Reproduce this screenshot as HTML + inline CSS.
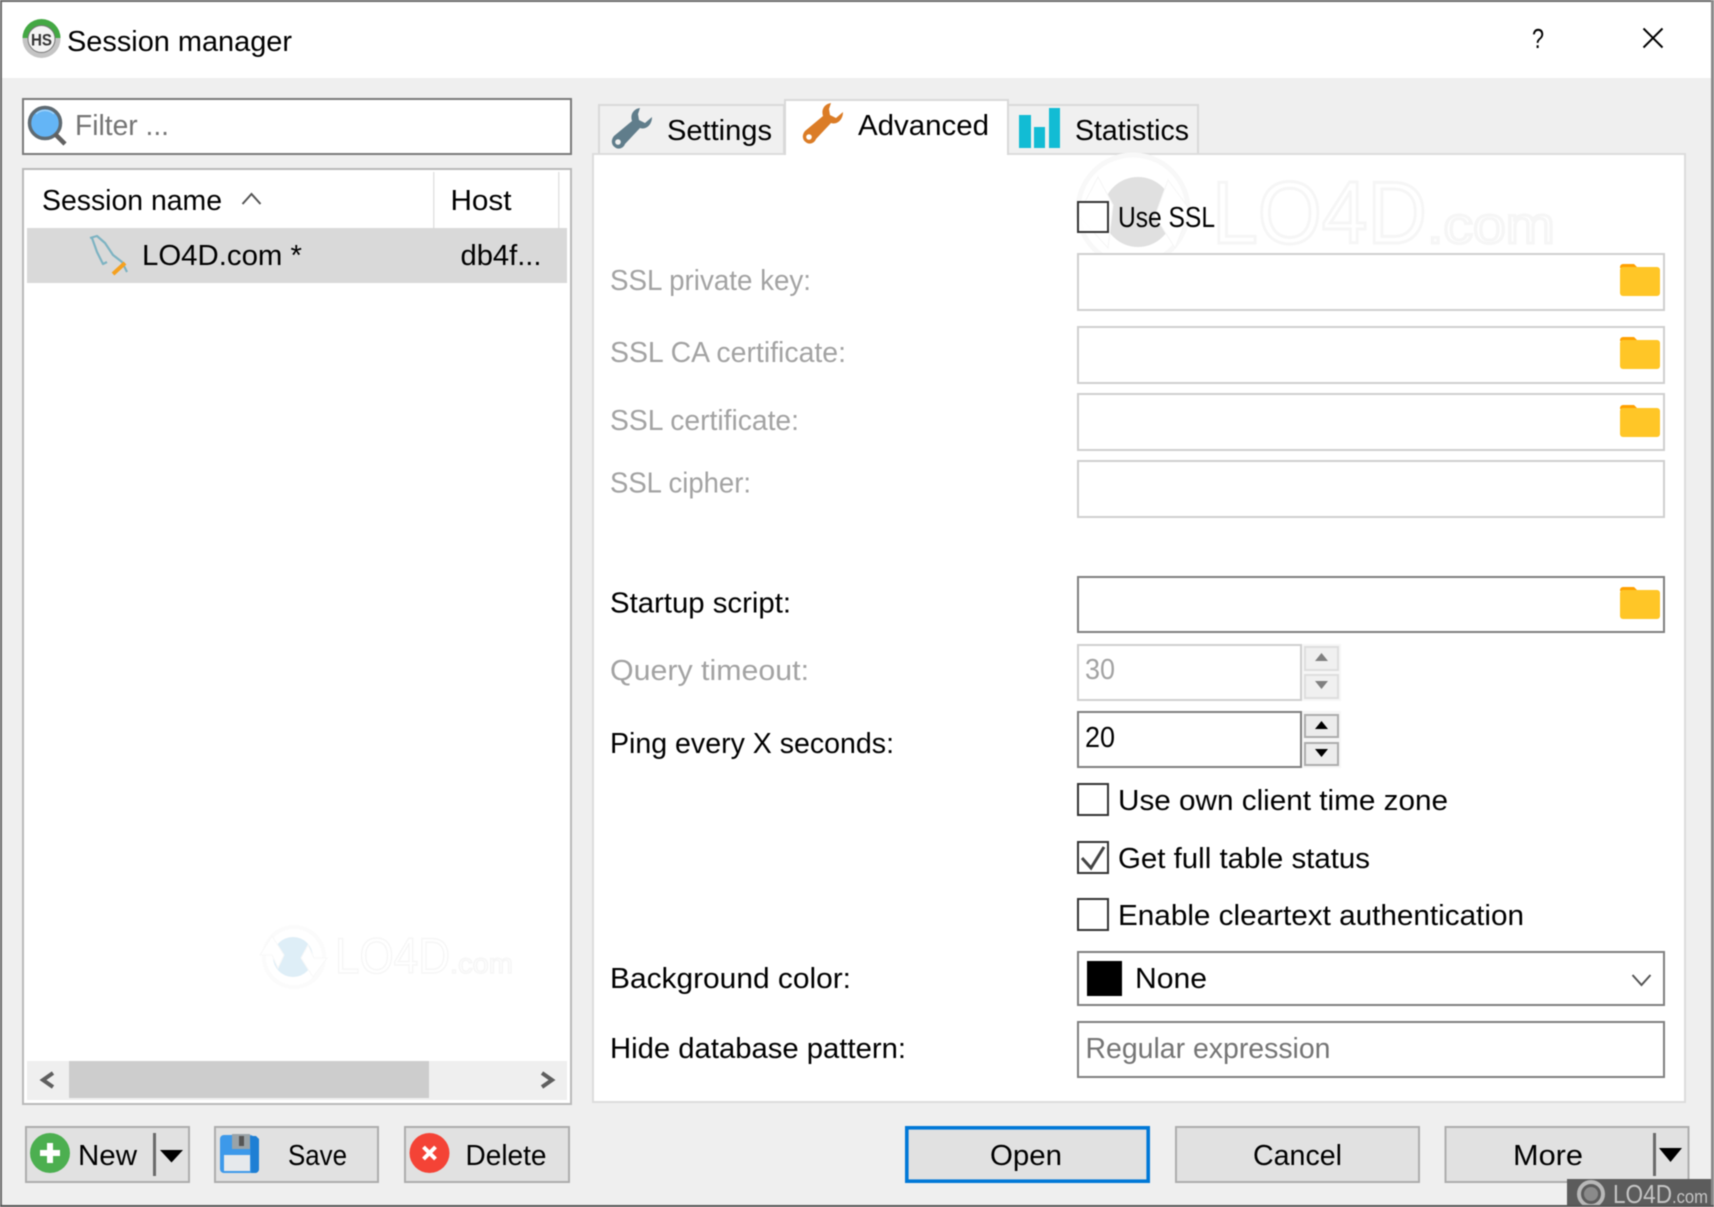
<!DOCTYPE html>
<html lang="en">
<head>
<meta charset="utf-8">
<title>Session manager</title>
<style>
html,body{margin:0;padding:0;width:1714px;height:1207px;overflow:hidden;background:#efefef}
svg{display:block;filter:blur(.55px)}
text{font-family:"Liberation Sans",Arial,sans-serif;font-size:29px;fill:#000;white-space:pre}
.g{fill:#a3a3a3}
.p{fill:#757575}
.w{font-size:88px;fill:#fff;stroke:#f6f6f6;stroke-width:3px}
.w2{font-size:52px;fill:#fff;stroke:#f6f6f6;stroke-width:3px}
</style>
</head>
<body>
<svg xmlns="http://www.w3.org/2000/svg" width="1714" height="1207" viewBox="0 0 1714 1207">
<defs>
<path id="wr" d="M28 0C21 1 18 7 20 13L2 28C-2 33 0 38 4 40C8 42 12 39 13 36L28 20C34 22 40 17 40 9L33 15L27 12L26 6Z"/>
<g id="fd">
<path d="M0 3a3 3 0 0 1 3-3h11l4 4H0Z" fill="#ffa000"/>
<rect x="0" y="3" width="40" height="29" rx="3" fill="#ffc627"/>
</g>
</defs>

<!-- window -->
<rect width="1714" height="1207" fill="#efefef"/>
<rect x="0" y="0" width="1714" height="78" fill="#fff"/>

<!-- title bar -->
<circle cx="41.5" cy="39" r="19" fill="#c4c4c4"/>
<path d="M22.5 38a19 19 0 0 1 38 0Z" fill="#43a843"/>
<circle cx="41.5" cy="39" r="13.500" fill="#f4f4f4" stroke="#777" stroke-width="1"/>
<text x="31" y="45.500" textLength="21" lengthAdjust="spacingAndGlyphs" style="font-size:17px;font-weight:700;fill:#333">HS</text>
<text x="67" y="51" textLength="225" lengthAdjust="spacingAndGlyphs">Session manager</text>
<text x="1532" y="48" textLength="12" lengthAdjust="spacingAndGlyphs" style="font-size:28px">?</text>
<path d="M1643.500 28.500 1662.500 47.500M1662.500 28.500 1643.500 47.500" stroke="#000" stroke-width="2" fill="none"/>

<!-- filter box -->
<rect x="23" y="99" width="548" height="55" fill="#fff" stroke="#7a7a7a" stroke-width="2"/>
<circle cx="45" cy="123" r="15.500" fill="#64b5f6" stroke="#5f6b73" stroke-width="3.500"/>
<path d="M36 114a13 13 0 0 1 18 0" stroke="#bbdefb" stroke-width="1.500" fill="none" opacity=".7"/>
<path d="M55 134 65 144" stroke="#616161" stroke-width="4.500"/>
<text x="75" y="135" textLength="94" lengthAdjust="spacingAndGlyphs" class="p">Filter ...</text>

<!-- session list -->
<rect x="23" y="169" width="548" height="935" fill="#fff" stroke="#b9b9b9" stroke-width="2"/>
<text x="42" y="210" textLength="180" lengthAdjust="spacingAndGlyphs">Session name</text>
<path d="M242.500 204 251.500 194 260.500 204" fill="none" stroke="#555" stroke-width="2"/>
<rect x="433" y="172" width="1.500" height="56" fill="#e3e3e3"/>
<rect x="558" y="172" width="1.500" height="56" fill="#e3e3e3"/>
<text x="450.500" y="210" textLength="61" lengthAdjust="spacingAndGlyphs">Host</text>
<rect x="27" y="228" width="540" height="55" fill="#d9d9d9"/>
<path d="M90 238 97 236 105 243 113 255 122 262 127 272M92 238 97 252 103 264 107 262" fill="none" stroke="#7db3c2" stroke-width="2.200" stroke-linejoin="round"/>
<path d="M113 274 125 263" stroke="#f5a11f" stroke-width="4"/>
<text x="142" y="265" textLength="160" lengthAdjust="spacingAndGlyphs">LO4D.com *</text>
<text x="460.500" y="265" textLength="81" lengthAdjust="spacingAndGlyphs">db4f...</text>

<!-- list watermark -->
<circle cx="294" cy="957" r="30" fill="none" stroke="#fbfbfb" stroke-width="4"/>
<circle cx="293" cy="957" r="20" fill="#deeef7"/>
<path d="M260 955 272 936 284 955 278 968 272 955Z M327 958 313 977 301 958 308 945 314 958Z" fill="#fff" stroke="#f8f8f8"/>
<text x="335" y="973" textLength="115" lengthAdjust="spacingAndGlyphs" style="font-size:50px;fill:#fff;stroke:#f6f6f6;stroke-width:1.500px">LO4D</text>
<text x="450" y="973" textLength="63" lengthAdjust="spacingAndGlyphs" style="font-size:28px;fill:#fff;stroke:#f6f6f6;stroke-width:1.500px">.com</text>

<!-- scrollbar -->
<rect x="27" y="1061" width="540" height="39" fill="#efefef"/>
<rect x="69" y="1061" width="360" height="37" fill="#cdcdcd"/>
<path d="M53 1073 43 1080 53 1087" fill="none" stroke="#5f5f5f" stroke-width="4"/>
<path d="M542 1073 552 1080 542 1087" fill="none" stroke="#5f5f5f" stroke-width="4"/>

<!-- left buttons -->
<rect x="26" y="1127" width="163" height="55" fill="#e1e1e1" stroke="#adadad" stroke-width="2"/>
<circle cx="50" cy="1153" r="20" fill="#4caf50"/>
<path d="M50 1143v20M40 1153h20" stroke="#fff" stroke-width="6"/>
<text x="78" y="1165" textLength="59" lengthAdjust="spacingAndGlyphs">New</text>
<rect x="153" y="1133" width="3" height="43" fill="#6a6a6a"/>
<path d="M160 1150h23l-11.500 12.500Z" fill="#000"/>

<rect x="215" y="1127" width="163" height="55" fill="#e1e1e1" stroke="#adadad" stroke-width="2"/>
<path d="M220 1139a4 4 0 0 1 4-4h27l8 4v30a4 4 0 0 1-4 4h-31a4 4 0 0 1-4-4Z" fill="#3d99ea"/>
<path d="M250 1136h6l3 3v30a4 4 0 0 1-4 4h-4Z" fill="#1e7fd4"/>
<rect x="232" y="1134" width="18" height="15" fill="#9aa3a8"/>
<rect x="239" y="1136" width="5" height="10" fill="#555"/>
<rect x="224" y="1155" width="26" height="16" fill="#e6e9ec"/>
<text x="288" y="1165" textLength="59" lengthAdjust="spacingAndGlyphs">Save</text>

<rect x="405" y="1127" width="164" height="55" fill="#e1e1e1" stroke="#adadad" stroke-width="2"/>
<circle cx="429.500" cy="1153" r="20" fill="#f44336"/>
<path d="M423.500 1147 435.500 1159M435.500 1147 423.500 1159" stroke="#fff" stroke-width="4"/>
<text x="465.500" y="1165" textLength="81" lengthAdjust="spacingAndGlyphs">Delete</text>

<!-- tabs -->
<rect x="599" y="105" width="185" height="50" fill="#f0f0f0" stroke="#d9d9d9" stroke-width="2"/>
<rect x="1008" y="105" width="190" height="50" fill="#f0f0f0" stroke="#d9d9d9" stroke-width="2"/>
<rect x="593" y="154" width="1092" height="948" fill="#fff" stroke="#dcdcdc" stroke-width="2"/>
<path d="M785 155V100H1008V155" fill="#fff" stroke="#d9d9d9" stroke-width="2"/>
<rect x="786" y="150" width="221" height="6" fill="#fff"/>

<use href="#wr" x="612" y="108" fill="#607d8b"/>
<circle cx="618" cy="142" r="2.800" fill="#f0f0f0"/>
<text x="667" y="140" textLength="105" lengthAdjust="spacingAndGlyphs">Settings</text>
<use href="#wr" x="803" y="103" fill="#db7c26"/>
<circle cx="809" cy="137" r="2.800" fill="#fff"/>
<text x="858" y="135" textLength="131" lengthAdjust="spacingAndGlyphs">Advanced</text>
<rect x="1019" y="115" width="12" height="33" fill="#12bcd4"/>
<rect x="1034" y="127" width="11" height="21" fill="#12bcd4"/>
<rect x="1049" y="108" width="11" height="40" fill="#12bcd4"/>
<text x="1075" y="140" textLength="114" lengthAdjust="spacingAndGlyphs">Statistics</text>

<!-- panel watermark -->
<circle cx="1133" cy="210" r="55" fill="none" stroke="#f8f8f8" stroke-width="5"/>
<circle cx="1138" cy="212" r="35" fill="#e0e0e0"/>
<path d="M1078 215 1098 177 1113 205 1108 248Z M1190 210 1175 248 1155 216 1168 180Z" fill="#fff" stroke="#f5f5f5"/>
<text x="1212" y="243" textLength="215" lengthAdjust="spacingAndGlyphs" class="w">LO4D</text>
<text x="1427" y="243" textLength="128" lengthAdjust="spacingAndGlyphs" class="w2">.com</text>

<!-- Use SSL -->
<rect x="1078" y="202" width="30" height="30" fill="#fff" fill-opacity=".8" stroke="#333" stroke-width="2"/>
<text x="1118" y="227" textLength="97" lengthAdjust="spacingAndGlyphs" fill="#000">Use SSL</text>

<!-- disabled rows -->
<text x="610" y="290" textLength="201" lengthAdjust="spacingAndGlyphs" class="g">SSL private key:</text>
<rect x="1078" y="254" width="586" height="56" fill="#fff" stroke="#cfcfcf" stroke-width="2"/>
<use href="#fd" x="1620" y="264"/>
<text x="610" y="362" textLength="236" lengthAdjust="spacingAndGlyphs" class="g">SSL CA certificate:</text>
<rect x="1078" y="327" width="586" height="56" fill="#fff" stroke="#cfcfcf" stroke-width="2"/>
<use href="#fd" x="1620" y="337"/>
<text x="610" y="430" textLength="189" lengthAdjust="spacingAndGlyphs" class="g">SSL certificate:</text>
<rect x="1078" y="394" width="586" height="56" fill="#fff" stroke="#cfcfcf" stroke-width="2"/>
<use href="#fd" x="1620" y="405"/>
<text x="610" y="492.500" textLength="141" lengthAdjust="spacingAndGlyphs" class="g">SSL cipher:</text>
<rect x="1078" y="461" width="586" height="56" fill="#fff" stroke="#cfcfcf" stroke-width="2"/>

<!-- startup -->
<text x="610" y="612.500" textLength="181" lengthAdjust="spacingAndGlyphs">Startup script:</text>
<rect x="1078" y="577" width="586" height="55" fill="#fff" stroke="#808080" stroke-width="2"/>
<use href="#fd" x="1620" y="587"/>

<!-- query timeout -->
<text x="610" y="680" textLength="199" lengthAdjust="spacingAndGlyphs" class="g">Query timeout:</text>
<rect x="1078" y="645" width="223" height="55" fill="#fff" stroke="#cfcfcf" stroke-width="2"/>
<text x="1085" y="679" textLength="30" lengthAdjust="spacingAndGlyphs" class="g">30</text>
<rect x="1302" y="644" width="39" height="57" fill="#f6f6f6"/>
<rect x="1305" y="647" width="33" height="23" fill="#f0f0f0" stroke="#dedede" stroke-width="2"/>
<rect x="1305" y="675" width="33" height="23" fill="#f0f0f0" stroke="#dedede" stroke-width="2"/>
<path d="M1315 661h13l-6.500-8Z" fill="#808080"/>
<path d="M1315 681h13l-6.500 8Z" fill="#808080"/>

<!-- ping -->
<text x="610" y="753" textLength="284" lengthAdjust="spacingAndGlyphs">Ping every X seconds:</text>
<rect x="1078" y="712" width="223" height="55" fill="#fff" stroke="#808080" stroke-width="2"/>
<text x="1085" y="747" textLength="30" lengthAdjust="spacingAndGlyphs">20</text>
<rect x="1302" y="711" width="39" height="57" fill="#f6f6f6"/>
<rect x="1305" y="715" width="33" height="22" fill="#ececec" stroke="#adadad" stroke-width="2"/>
<rect x="1305" y="743" width="33" height="22" fill="#ececec" stroke="#adadad" stroke-width="2"/>
<path d="M1315 729h13l-6.500-8Z" fill="#000"/>
<path d="M1315 749h13l-6.500 8Z" fill="#000"/>

<!-- checkboxes -->
<rect x="1078" y="784" width="30" height="31" fill="#fff" stroke="#333" stroke-width="2"/>
<text x="1118" y="810" textLength="330" lengthAdjust="spacingAndGlyphs">Use own client time zone</text>
<rect x="1078" y="842" width="30" height="31" fill="#fff" stroke="#333" stroke-width="2"/>
<path d="M1082 858 1091 868 1104 847" fill="none" stroke="#444" stroke-width="3"/>
<text x="1118" y="868" textLength="252" lengthAdjust="spacingAndGlyphs">Get full table status</text>
<rect x="1078" y="899" width="30" height="31" fill="#fff" stroke="#333" stroke-width="2"/>
<text x="1118" y="925" textLength="406" lengthAdjust="spacingAndGlyphs">Enable cleartext authentication</text>

<!-- combo -->
<text x="610" y="988" textLength="241" lengthAdjust="spacingAndGlyphs">Background color:</text>
<rect x="1078" y="952" width="586" height="53" fill="#fff" stroke="#808080" stroke-width="2"/>
<rect x="1087" y="961" width="35" height="35" fill="#000"/>
<text x="1135" y="988" textLength="72" lengthAdjust="spacingAndGlyphs">None</text>
<path d="M1632.500 975 1641.500 985 1650.500 975" fill="none" stroke="#555" stroke-width="2"/>

<!-- regex -->
<text x="610" y="1058" textLength="296" lengthAdjust="spacingAndGlyphs">Hide database pattern:</text>
<rect x="1078" y="1022" width="586" height="55" fill="#fff" stroke="#808080" stroke-width="2"/>
<text x="1085.500" y="1058" textLength="245" lengthAdjust="spacingAndGlyphs" class="p">Regular expression</text>

<!-- bottom buttons -->
<rect x="906.800" y="1127.800" width="241.400" height="53.400" fill="#e1e1e1" stroke="#0078d7" stroke-width="3.600"/>
<text x="990" y="1165" textLength="72" lengthAdjust="spacingAndGlyphs">Open</text>
<rect x="1176" y="1127" width="243" height="55" fill="#e1e1e1" stroke="#adadad" stroke-width="2"/>
<text x="1253" y="1165" textLength="89" lengthAdjust="spacingAndGlyphs">Cancel</text>
<rect x="1445.500" y="1127" width="243" height="55" fill="#e1e1e1" stroke="#adadad" stroke-width="2"/>
<text x="1513" y="1165" textLength="70" lengthAdjust="spacingAndGlyphs">More</text>
<rect x="1653" y="1133" width="3" height="43" fill="#6a6a6a"/>
<path d="M1659 1148h23l-11.500 14Z" fill="#000"/>

<!-- badge -->
<rect x="1567" y="1179" width="147" height="27" fill="#5c5c5c"/>
<circle cx="1591" cy="1194" r="12" fill="none" stroke="#b8b8b8" stroke-width="4"/>
<circle cx="1591" cy="1194" r="7" fill="#8a8a8a"/>
<text x="1613" y="1203" textLength="59" lengthAdjust="spacingAndGlyphs" style="font-size:26px;fill:#c4c4c4">LO4D</text>
<text x="1672" y="1203" textLength="36" lengthAdjust="spacingAndGlyphs" style="font-size:18px;fill:#c4c4c4">.com</text>

<!-- outer frame -->
<rect x="0" y="0" width="1714" height="2" fill="#6a6a6a"/>
<rect x="0" y="0" width="2" height="1207" fill="#6a6a6a"/>
<rect x="1711" y="0" width="3" height="1207" fill="#8a8a8a"/>
<rect x="0" y="1205" width="1714" height="2" fill="#555"/>
</svg>
</body>
</html>
